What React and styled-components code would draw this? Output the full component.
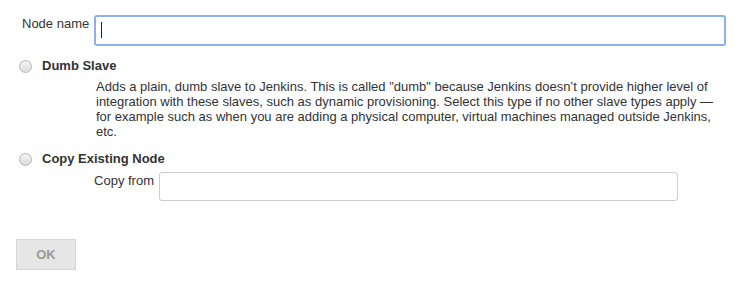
import styled, { createGlobalStyle } from "styled-components";

const GlobalStyle = createGlobalStyle`
  body {
    margin: 0;
    background: #fff;
    font-family: "Liberation Sans", Arial, sans-serif;
    font-size: 13px;
    color: #333;
  }
`;

const Page = styled.div`
  padding: 15px 19px 0 16px;
`;

const FieldRow = styled.div`
  display: flex;
  align-items: flex-start;
  gap: 5px;
  padding-left: ${(p) => p.indent || 0}px;
  margin-top: ${(p) => p.top || 0}px;
`;

const Label = styled.label`
  width: ${(p) => p.width}px;
  text-align: right;
  white-space: nowrap;
  padding-top: 1px;
  line-height: 15px;
  flex-shrink: 0;
`;

const InputWrap = styled.div`
  position: relative;
`;

const TextInput = styled.input`
  display: block;
  box-sizing: border-box;
  width: ${(p) => p.width}px;
  height: ${(p) => (p.focused ? 31 : 29)}px;
  border: ${(p) => (p.focused ? "2px solid #8cb0ef" : "1px solid #ccc")};
  border-radius: 3px;
  padding: 0 6px;
  font: inherit;
  outline: none;
  background: #fff;
  caret-color: transparent;
`;

const Caret = styled.span`
  position: absolute;
  left: 7px;
  top: 7px;
  width: 1px;
  height: 16px;
  background: #222;
`;

const Option = styled.div`
  display: flex;
  align-items: center;
  gap: 10px;
  margin-top: ${(p) => p.top}px;
  padding-left: 3px;
`;

const Radio = styled.span`
  width: 11px;
  height: 11px;
  border-radius: 50%;
  border: 1px solid #b5b5b5;
  background: linear-gradient(#f4f4f4, #dcdcdc);
  flex-shrink: 0;
`;

const OptionTitle = styled.span`
  font-weight: bold;
  line-height: 16px;
`;

const Description = styled.p`
  margin: 5px 0 0 80px;
  line-height: 15px;
  width: 620px;
`;

const Button = styled.button`
  display: block;
  margin-top: 38px;
  width: 60px;
  height: 31px;
  border: 1px solid #d6d6d6;
  background: #e6e6e6;
  color: #9a9a9a;
  font: bold 13px "Liberation Sans", Arial, sans-serif;
  padding: 0;
`;

export default function App() {
  return (
    <>
      <GlobalStyle />
      <Page>
        <FieldRow indent={6}>
          <Label width={67}>Node name</Label>
          <InputWrap>
            <TextInput focused width={632} defaultValue="" />
            <Caret />
          </InputWrap>
        </FieldRow>
        <Option top={12}>
          <Radio />
          <OptionTitle>Dumb Slave</OptionTitle>
        </Option>
        <Description>
          Adds a plain, dumb slave to Jenkins. This is called "dumb" because Jenkins doesn’t provide
          higher level of integration with these slaves, such as dynamic provisioning. Select this
          type if no other slave types apply — for example such as when you are adding a physical
          computer, virtual machines managed outside Jenkins, etc.
        </Description>
        <Option top={12}>
          <Radio />
          <OptionTitle>Copy Existing Node</OptionTitle>
        </Option>
        <FieldRow indent={78} top={5}>
          <Label width={60}>Copy from</Label>
          <TextInput width={519} />
        </FieldRow>
        <Button>OK</Button>
      </Page>
    </>
  );
}
